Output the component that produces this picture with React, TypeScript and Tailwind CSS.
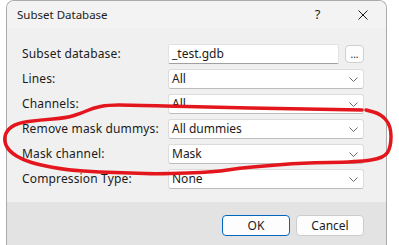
import React from "react";

const rows = [
  { label: "Lines:", value: "All" },
  { label: "Channels:", value: "All" },
  { label: "Remove mask dummys:", value: "All dummies" },
  { label: "Mask channel:", value: "Mask" },
  { label: "Compression Type:", value: "None" },
];

// freehand red marker loop drawn over the dialog
const loop: [number, number][] = [
  [362, 110], [300, 109], [200, 107], [130, 105], [108, 105], [93, 108], [82, 113],
  [66, 118], [40, 120], [17, 123], [6, 131], [4, 142], [10, 152], [23, 160],
  [40, 165], [67, 170], [100, 172], [130, 173], [160, 174], [215, 172], [240, 168],
  [265, 166], [300, 163], [358, 162], [384, 158], [391, 147], [391, 126], [381, 114],
  [366, 110],
];

const smooth = (pts: [number, number][]) => {
  let d = `M ${pts[0][0]} ${pts[0][1]}`;
  for (let i = 1; i < pts.length - 1; i++) {
    const mx = (pts[i][0] + pts[i + 1][0]) / 2;
    const my = (pts[i][1] + pts[i + 1][1]) / 2;
    d += ` Q ${pts[i][0]} ${pts[i][1]} ${mx} ${my}`;
  }
  const last = pts[pts.length - 1];
  return d + ` L ${last[0]} ${last[1]}`;
};

const Chevron = () => (
  <svg width="9" height="5" viewBox="0 0 9 5" className="shrink-0">
    <path d="M0.5 0.5 L4.5 4.5 L8.5 0.5" fill="none" stroke="#6a6a6a" strokeWidth="1" />
  </svg>
);

export default function App() {
  return (
    <div className="relative w-[399px] h-[245px] overflow-hidden bg-white pl-[6px] font-['Noto_Sans',sans-serif] text-[12px] text-[#1b1b1b]">
      <div className="w-[381px] h-[260px] flex flex-col rounded-t-[8px] border border-b-0 border-[#aaaaaa] overflow-hidden">
        {/* Title bar */}
        <div className="h-[27px] shrink-0 flex items-center bg-[#f3f3f3]">
          <span className="flex-1 pl-[10px] text-[11.5px]">Subset Database</span>
          <span className="w-[45px] text-center text-[13px]">?</span>
          <span className="w-[46px] flex justify-center">
            <svg width="10" height="10" viewBox="0 0 10 10">
              <path d="M0.5 0.5 L9.5 9.5 M9.5 0.5 L0.5 9.5" stroke="#1b1b1b" strokeWidth="1" />
            </svg>
          </span>
        </div>

        {/* Body */}
        <div className="h-[174px] shrink-0 bg-[#f0f0f0] pt-[16px] pl-[15px] pr-[22px] grid grid-cols-[146px_1fr] auto-rows-[20px] gap-y-[5px] content-start">
          <span className="flex items-center tracking-[0.15px]">Subset database:</span>
          <div className="flex gap-[6px]">
            <div className="flex-1 flex items-center bg-white border border-[#e2e2e2] border-b-[#a0a0a0] rounded-[2px] pl-[3px]">
              _test.gdb
            </div>
            <div className="w-[19px] h-[18px] mt-[1px] flex items-end justify-center pb-[3px] bg-[#fdfdfd] border border-[#cfcfcf] rounded-[4px] text-[10px] leading-none">
              ...
            </div>
          </div>
          {rows.map((r) => (
            <React.Fragment key={r.label}>
              <span className="flex items-center tracking-[0.15px]">{r.label}</span>
              <div className="flex items-center justify-between bg-white border border-[#dcdcdc] border-b-[#bdbdbd] rounded-[3px] pl-[3px] pr-[5px]">
                <span>{r.value}</span>
                <Chevron />
              </div>
            </React.Fragment>
          ))}
        </div>

        {/* Footer */}
        <div className="flex-1 bg-[#e3e3e3] flex justify-end gap-[6px] pt-[13px] pr-[22px]">
          <button className="w-[68px] h-[21px] rounded-[4px] border border-[#0067c0] bg-[#fdfdfd]">OK</button>
          <button className="w-[68px] h-[21px] rounded-[4px] border border-[#cccccc] bg-[#fdfdfd]">Cancel</button>
        </div>
      </div>

      <svg className="absolute inset-0 pointer-events-none" width="399" height="245" viewBox="0 0 399 245">
        <path d={smooth(loop)} fill="none" stroke="#e3161d" strokeWidth="3.5" strokeLinecap="round" strokeLinejoin="round" />
      </svg>
    </div>
  );
}
